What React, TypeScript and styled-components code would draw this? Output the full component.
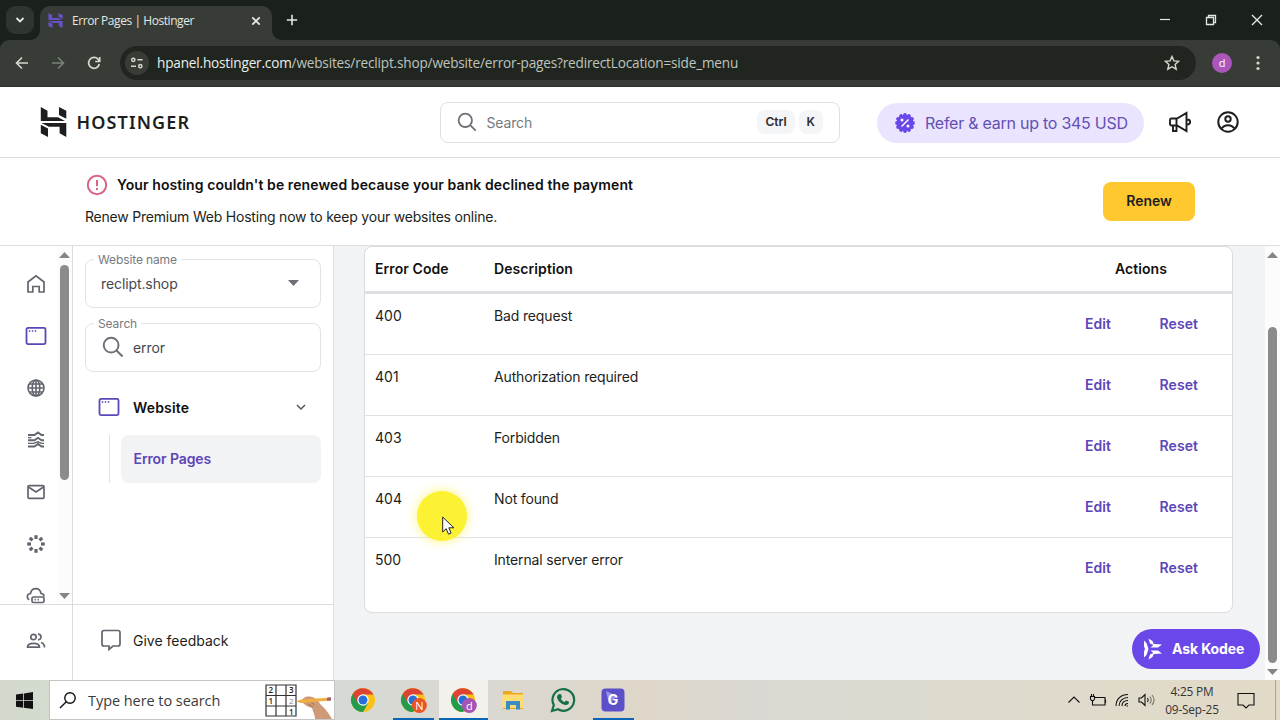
import React from 'react';
import styled, { createGlobalStyle } from 'styled-components';

const GlobalStyle = createGlobalStyle`
  * {
    box-sizing: border-box;
  }

  body {
    margin: 0;
    overflow: hidden;
    font-family: Inter, 'Liberation Sans', sans-serif;
    font-size: 14px;
    color: #1d1e20;
  }

  svg {
    display: block;
    flex-shrink: 0;
  }

  p, h3 {
    margin: 0;
  }

  button {
    border: none;
    padding: 0;
    background: none;
    font-family: inherit;
  }
`;

const Screen = styled.div`
  width: 1280px;
  height: 720px;
  display: flex;
  flex-direction: column;
  position: relative;
  overflow: hidden;
  background: #fff;
`;

/* browser window */

const TabStrip = styled.div`
  height: 40px;
  display: flex;
  align-items: flex-end;
  background: #1a201a;
  color: #e4e7e3;
`;
const TabSearch = styled.div`
  width: 28px;
  height: 28px;
  margin: 0 6px 6px;
  border-radius: 9px;
  display: grid;
  place-items: center;
  background: #2e342e;
`;
const Tab = styled.div`
  width: 232px;
  height: 34px;
  padding: 0 11px 5px 8px;
  border-radius: 10px 10px 0 0;
  display: flex;
  align-items: center;
  position: relative;
  background: #373d36;

  &::before,
  &::after {
    content: '';
    position: absolute;
    bottom: 0;
    width: 9px;
    height: 9px;
  }
  &::before {
    left: -9px;
    background: radial-gradient(circle at 0 0, transparent 8.5px, #373d36 9px);
  }
  &::after {
    right: -9px;
    background: radial-gradient(circle at 100% 0, transparent 8.5px, #373d36 9px);
  }
`;
const TabIcon = styled.span`
  color: #6950c8;
`;
const TabTitle = styled.span`
  flex: 1;
  margin-left: 9px;
  font: 12px/16px 'Open Sans', sans-serif;
  letter-spacing: -0.44px;
`;
const NewTab = styled.div`
  width: 40px;
  height: 40px;
  display: grid;
  place-items: center;
`;
const WindowButtons = styled.div`
  height: 40px;
  margin-left: auto;
  display: grid;
  grid-template-columns: repeat(3, 46px);
  place-items: center;
`;
const ToolbarBack = styled.div`
  height: 47px;
  background: #1a201a;
`;
const Toolbar = styled.div`
  height: 47px;
  padding-left: 4px;
  border-radius: 9px 9px 0 0;
  border-bottom: 1px solid #2b302b;
  display: flex;
  align-items: center;
  background: #373d36;
  color: #d3d8d1;
`;
const NavButton = styled.div<{ $dim?: boolean }>`
  width: 36px;
  display: grid;
  place-items: center;
  color: ${(props) => (props.$dim ? '#7b817a' : '#d3d8d1')};
`;
const AddressBar = styled.div`
  width: 1076px;
  height: 34px;
  margin-left: 8px;
  padding: 0 16px 0 5px;
  border-radius: 17px;
  display: flex;
  align-items: center;
  background: #20261f;
`;
const SiteInfo = styled.div`
  width: 24px;
  height: 24px;
  margin-right: 8px;
  border-radius: 50%;
  display: grid;
  place-items: center;
  background: #373d36;
`;
const Url = styled.span`
  flex: 1;
  font: 13.6px/20px 'Open Sans', sans-serif;
  letter-spacing: -0.18px;
  color: #bfc4be;

  b {
    font-weight: 400;
    color: #eceeeb;
  }
`;
const Avatar = styled.div`
  width: 20px;
  height: 20px;
  margin: 0 16px;
  border-radius: 50%;
  background: #ac55bb;
  color: #fff;
  font: 11px/20px 'Open Sans', sans-serif;
  text-align: center;
`;

/* site header */

const Header = styled.header`
  height: 71px;
  padding: 0 40px;
  border-bottom: 1px solid #dadce0;
  display: grid;
  grid-template-columns: 400px 400px 1fr;
  align-items: center;
  flex-shrink: 0;
`;
const Logo = styled.div`
  display: flex;
  align-items: center;
  gap: 9.5px;
`;
const LogoName = styled.span`
  font: 600 18px/24px 'Noto Sans', sans-serif;
  letter-spacing: 1.12px;
  color: #1d1e20;
`;
const SearchBox = styled.div`
  height: 41px;
  padding: 0 16px;
  border: 1px solid #dfe0e4;
  border-radius: 8px;
  display: flex;
  align-items: center;
  color: #6d7078;
`;
const SearchHint = styled.span`
  flex: 1;
  margin-left: 9.5px;
  font-size: 14px;
  letter-spacing: -0.15px;
  color: #77797e;
`;
const Key = styled.kbd`
  height: 24px;
  margin-left: 4px;
  padding: 0 8px;
  border-radius: 8px;
  background: #f4f5f7;
  color: #2a2c31;
  font: 600 12px/24px Inter, sans-serif;
`;
const HeaderActions = styled.div`
  padding-left: 37px;
  display: flex;
  align-items: center;
`;
const ReferButton = styled.button`
  width: 267px;
  height: 40px;
  margin: 1px 24px 0 0;
  padding-left: 18px;
  border-radius: 20px;
  display: flex;
  align-items: center;
  gap: 10px;
  background: #ebe4ff;
  color: #6250b5;
  font-size: 16px;
  letter-spacing: -0.25px;
  white-space: nowrap;
`;
const Spacer = styled.div`
  width: 24px;
`;

/* payment notice */

const Notice = styled.section`
  height: 88px;
  padding: 0 85px 1px;
  border-bottom: 1px solid #dcdde0;
  display: flex;
  align-items: center;
  justify-content: space-between;
  flex-shrink: 0;
`;
const NoticeBody = styled.div`
  padding-bottom: 2px;
`;
const NoticeTitle = styled.h3`
  display: flex;
  align-items: center;
  gap: 8px;
  margin-bottom: 10px;
  font-size: 14px;
  font-weight: 600;
  line-height: 24px;
  letter-spacing: 0.09px;
  color: #111;
`;
const NoticeIcon = styled.span`
  color: #d76483;
`;
const NoticeText = styled.p`
  font-size: 14px;
  line-height: 20px;
  letter-spacing: -0.21px;
`;
const RenewButton = styled.button`
  width: 92px;
  height: 39px;
  padding-bottom: 1px;
  border-radius: 8px;
  background: #ffc82e;
  color: #1d1e20;
  font-size: 14px;
  font-weight: 600;
`;

/* body */

const Body = styled.div`
  height: 434px;
  display: grid;
  grid-template-columns: 73px 261px 1fr 15px;
  background: #f2f3f5;
`;
const Rail = styled.nav`
  border-right: 1px solid #dadce0;
  display: grid;
  grid-template-rows: 359px 1fr;
  background: #fff;
  color: #62656d;
`;
const RailScroll = styled.div`
  display: flex;
  border-bottom: 1px solid #dadce0;
  overflow: hidden;
`;
const RailItems = styled.div`
  flex: 1;
  padding: 11.5px 0 0 14px;
`;
const RailItem = styled.div<{ $active?: boolean }>`
  height: 52px;
  display: grid;
  place-items: center;
  color: ${(props) => (props.$active ? '#5c46b8' : '#62656d')};
`;
const RailBottom = styled.div`
  display: grid;
  place-items: center;
  padding-bottom: 4px;
`;
const Scrollbar = styled.div<{ $start: number; $length: number }>`
  width: 15px;
  display: grid;
  grid-template-rows: ${(props) => `${props.$start}px ${props.$length}px 1fr`};
  justify-items: center;
  background: #fcfcfc;
  color: #858585;

  svg:first-child {
    margin-top: 6px;
  }
  svg:last-child {
    align-self: end;
    margin-bottom: 5px;
  }
`;
const Thumb = styled.div`
  width: 9px;
  border-radius: 5px;
  background: #8b8b8b;
`;
const Panel = styled.aside`
  border-right: 1px solid #dfe0e4;
  display: grid;
  grid-template-rows: 359px 1fr;
  background: #fff;
`;
const PanelTop = styled.div`
  padding: 5.5px 12px 0;
  border-bottom: 1px solid #dadce0;
`;
const Field = styled.fieldset`
  height: 56px;
  margin: 0 0 8px;
  padding: 0 21px 7px 15px;
  border: 1px solid #e2e3e6;
  border-radius: 8px;
  display: flex;
  align-items: center;
  color: #6d7078;
`;
const FieldLabel = styled.legend`
  margin-left: -7px;
  padding: 0 4px;
  font-size: 12px;
  line-height: 15px;
  letter-spacing: -0.12px;
  color: #77797e;
`;
const FieldIcon = styled.span`
  margin: 0 9px 0 1px;
`;
const FieldValue = styled.span`
  flex: 1;
  letter-spacing: -0.1px;
  color: #45474c;
`;
const MenuHeading = styled.div`
  height: 48px;
  margin-top: 11.5px;
  padding: 0 14px 0 13px;
  display: flex;
  align-items: center;
  color: #5c46b8;
`;
const MenuTitle = styled.span`
  flex: 1;
  margin-left: 13px;
  font-weight: 600;
  letter-spacing: 0.15px;
  color: #111;
`;
const SubMenu = styled.div`
  margin: 4px 0 0 24px;
  padding-left: 11px;
  border-left: 1px solid #dfe0e4;
`;
const SubMenuItem = styled.div`
  height: 48px;
  padding-left: 12.5px;
  border-radius: 8px;
  background: #f2f3f5;
  color: #5c46b8;
  font-weight: 600;
  line-height: 48px;
  letter-spacing: -0.1px;
`;
const Feedback = styled.div`
  padding: 0 0 5px 26px;
  display: flex;
  align-items: center;
  gap: 10px;
  color: #62656d;

  span {
    color: #1d1e20;
  }
`;
const Content = styled.main`
  padding: 0 5px 0 30px;
  display: flex;
  flex-direction: column;
`;
const Table = styled.div`
  width: 869px;
  height: 367px;
  border: 1px solid #dadce0;
  border-radius: 8px;
  background: #fff;
`;
const Row = styled.div`
  height: 61px;
  padding-left: 10px;
  border-bottom: 1px solid #e1e2e6;
  display: grid;
  grid-template-columns: 119px 1fr 74.5px 72.5px;
  line-height: 44px;

  &:last-child {
    border-bottom: none;
  }
`;
const HeadRow = styled(Row)`
  height: 47px;
  border-bottom: 3px solid #dfe0e4;
  grid-template-columns: 119px 1fr 182px;
  font-weight: 600;
  line-height: 43px;
  letter-spacing: 0.08px;
  color: #111;
`;
const Description = styled.span`
  letter-spacing: -0.15px;
`;
const ActionsHead = styled.span`
  text-align: center;
`;
const TextButton = styled.button`
  height: 60px;
  padding-bottom: 2px;
  text-align: left;
  color: #5c46b8;
  font-size: 14px;
  font-weight: 600;
  letter-spacing: 0.08px;
`;
const KodeeButton = styled.button`
  width: 128px;
  height: 40px;
  margin: 16px 0 0 auto;
  padding: 0 0 1px 11px;
  border-radius: 20px;
  display: flex;
  align-items: center;
  gap: 9px;
  background: #6947e8;
  color: #fff;
  font-size: 14px;
  font-weight: 700;
  letter-spacing: -0.1px;
  white-space: nowrap;
`;

/* mouse pointer with its highlight, drawn over everything */

const Pointer = styled.div`
  position: absolute;
  left: 417px;
  top: 491px;
  width: 50px;
  height: 50px;
  padding: 25px 0 0 25px;
  border-radius: 50%;
  background: #fdf133;
  box-shadow: 0 0 9px 2px rgba(251, 243, 80, 0.55);
`;

/* windows taskbar */

const Taskbar = styled.footer`
  height: 40px;
  display: flex;
  align-items: stretch;
  background: linear-gradient(90deg, #d3dacd 0, #d6d9d4 335px, #dad8d2 480px, #ded6c8 640px, #d9d8d2 760px, #dedacd 1000px, #e2dac7 1280px);
  color: #111;
`;
const StartButton = styled.div`
  width: 49px;
  padding-right: 1px;
  display: grid;
  place-items: center;
`;
const TaskSearch = styled.div`
  width: 286px;
  padding-left: 9px;
  border: 1px solid #c4c6c3;
  display: flex;
  align-items: center;
  background: #fff;
`;
const TaskSearchText = styled.span`
  width: 178px;
  margin: 2px 0 0 12px;
  font: 14.5px/20px 'Open Sans', sans-serif;
  letter-spacing: -0.06px;
  color: #3b3b3b;
`;
const Apps = styled.div`
  margin-left: 3px;
  display: grid;
  grid-template-columns: repeat(6, 50px);
`;
const AppButton = styled.div<{ $active?: boolean; $open?: boolean }>`
  margin: 0 0.5px;
  padding-top: 2px;
  display: grid;
  grid-template-rows: 36px 2px;
  place-items: center;
  background: ${(props) => (props.$active ? '#f3f1ec' : 'transparent')};

  &::after {
    content: '';
    width: ${(props) => (props.$active ? '49px' : '41px')};
    height: 2px;
    background: ${(props) => (props.$open ? '#0b65b5' : 'transparent')};
  }
`;
const Tray = styled.div`
  margin-left: auto;
  display: flex;
  align-items: center;
`;
const TrayIcons = styled.div`
  display: grid;
  grid-template-columns: repeat(4, 24px);
  place-items: center;
`;
const Clock = styled.div`
  width: 68px;
  font: 11.8px/18px 'Open Sans', sans-serif;
  letter-spacing: -0.15px;
  text-align: center;
  color: #333;
  white-space: nowrap;
`;
const Notifications = styled.div`
  width: 50px;
  height: 40px;
  margin-right: 4px;
  padding-right: 20px;
  border-right: 1px solid #aaa596;
  display: grid;
  place-items: center end;
`;

type IconProps = { w?: number; h?: number; box?: string; sw?: number; children: React.ReactNode };

const Icon = ({ w = 24, h = w, box = `0 0 ${w} ${h}`, sw = 1.7, children }: IconProps) => (
  <svg width={w} height={h} viewBox={box} fill="none" stroke="currentColor" strokeWidth={sw}>
    {children}
  </svg>
);

const HMark = ({ w, h }: { w: number; h: number }) => (
  <svg width={w} height={h} viewBox="0 0 27 30" preserveAspectRatio="none" fill="currentColor">
    <path d="M.8 0l6.700 3.800v6.400H18l7 3.700H.8zM19 0l7.300 3.800v8L19 8z" />
    <path d="M26.300 30l-6.700-3.800v-6.400H9l-7.500-3.900h24.800zM8 30L.8 26.200v-8.500L8 21.500z" />
  </svg>
);

const Magnifier = ({ size = 20 }: { size?: number }) => (
  <Icon w={size} box="0 0 20 20" sw={1.8}>
    <circle cx="8.300" cy="8.300" r="6.700" />
    <path d="M13.200 13.200l5.500 5.500" />
  </Icon>
);

const BrowserIcon = () => (
  <Icon w={22} h={20} sw={1.8}>
    <rect x="1.500" y="1.900" width="19" height="16.200" rx="1.500" />
    <path d="M3.800 5h1.500M6.800 5h1.500M9.800 5h1.500" strokeWidth="1.500" />
  </Icon>
);

const Arrow = ({ up }: { up?: boolean }) => (
  <svg width="11" height="6" viewBox="0 0 11 6" fill="currentColor">
    <path d={up ? 'M0 6L5.500 0L11 6z' : 'M0 0L5.500 6L11 0z'} />
  </svg>
);

const ChromeIcon = ({ badge, color }: { badge?: string; color?: string }) => (
  <svg width="28" height="26" viewBox="0 0 28 26">
    <circle cx="14" cy="13" r="12" fill="#fbc116" />
    <path d="M14 13L3.600 7A12 12 0 0 0 14 25l5.200-9z" fill="#229b4b" />
    <path d="M14 13v-5.500h10.500A12 12 0 0 0 3.600 7l5.200 9z" fill="#dd4332" />
    <circle cx="14" cy="13" r="5.700" fill="#fff" />
    <circle cx="14" cy="13" r="4.500" fill="#2470d8" />
    {badge && (
      <>
        <circle cx="20.300" cy="18.500" r="7.500" fill={color} />
        <text x="20.300" y="22.500" textAnchor="middle" fontSize="11" fontFamily="Open Sans" fill="#fff">
          {badge}
        </text>
      </>
    )}
  </svg>
);

const railIcons = [
  <Icon w={20}>
    <path d="M2 8L10 1.800 18 8v10h-4.800v-5.500H6.800V18H2z" />
  </Icon>,
  <BrowserIcon />,
  <Icon w={20} sw={1.6}>
    <circle cx="10" cy="10" r="8" />
    <ellipse cx="10" cy="10" rx="3.800" ry="8" />
    <path d="M10 2v16M2 10h16M3 6h14M3 14h14" />
  </Icon>,
  <Icon w={18} sw={1.900}>
    <path d="M1 4h6.500l3.500-2.500L14.500 4H17" />
    <path d="M1 9.300h6.500L11 6.800l3.500 2.500H17" />
    <path d="M1 15.500h6.500L11 13l3.500 2.500H17" />
    <path d="M1 6.700h3.500M1 12.300h5.500l4.500-1.500 3.500 1.500H17" strokeWidth="1.300" />
  </Icon>,
  <Icon w={20}>
    <rect x="2" y="3.700" width="16" height="12.600" rx="1" />
    <path d="M2.500 5l7.500 5 7.500-5" />
  </Icon>,
  <Icon w={20} sw={3.200}>
    {[0, 45, 90, 135, 180, 225, 270, 315].map((deg) => (
      <path key={deg} d="M10 1.200v3.800" transform={`rotate(${deg} 10 10)`} />
    ))}
  </Icon>,
  <Icon w={20}>
    <path d="M3 14C0 11 1.500 7.500 4.500 7.500 5.500 1 14 1 15 7.500c2 0 3 1.500 3 3" />
    <rect x="6" y="11" width="12" height="5.500" rx="1.500" />
    <path d="M8.500 13.700h1.300M11.500 13.700h1.300" />
  </Icon>,
];

const errors = [
  { code: '400', description: 'Bad request' },
  { code: '401', description: 'Authorization required' },
  { code: '403', description: 'Forbidden' },
  { code: '404', description: 'Not found' },
  { code: '500', description: 'Internal server error' },
];

const Browser = () => (
  <>
    <TabStrip>
      <TabSearch>
        <Icon w={10} sw={1.8}>
          <path d="M1.500 3l3.500 3.500L8.500 3" />
        </Icon>
      </TabSearch>
      <Tab>
        <TabIcon>
          <HMark w={15} h={15} />
        </TabIcon>
        <TabTitle>Error Pages | Hostinger</TabTitle>
        <Icon w={10} sw={1.8}>
          <path d="M1.300 1.300l7.400 7.400M8.700 1.300L1.300 8.700" />
        </Icon>
      </Tab>
      <NewTab>
        <Icon w={12} sw={1.6}>
          <path d="M6 .8v10.400M.8 6h10.400" />
        </Icon>
      </NewTab>
      <WindowButtons>
        <Icon w={12} sw={1.2}>
          <path d="M1 5.500h10" />
        </Icon>
        <Icon w={12} sw={1.3}>
          <path d="M1.500 3.500h7v7h-7zM3.500 3V1.500h7v7H9" />
        </Icon>
        <Icon w={12} sw={1.4}>
          <path d="M1 1l10 10M11 1L1 11" />
        </Icon>
      </WindowButtons>
    </TabStrip>
    <ToolbarBack>
      <Toolbar>
        <NavButton>
          <Icon w={14} sw={1.6}>
            <path d="M13 7H1.500M7 1.500L1.500 7 7 12.500" />
          </Icon>
        </NavButton>
        <NavButton $dim>
          <Icon w={14} sw={1.6}>
            <path d="M1 7h11.500M7 1.500L12.500 7 7 12.500" />
          </Icon>
        </NavButton>
        <NavButton>
          <Icon w={14} sw={1.7}>
            <path d="M12.300 8A5.400 5.400 0 1 1 11 3.200L12.500 5M12.700 1v4.500H8.200" />
          </Icon>
        </NavButton>
        <AddressBar>
          <SiteInfo>
            <Icon w={14} sw={1.5}>
              <circle cx="3.300" cy="3.800" r="1.600" />
              <path d="M7.500 3.800h5M1 10.200h5" />
              <circle cx="10.300" cy="10.200" r="1.600" />
            </Icon>
          </SiteInfo>
          <Url>
            <b>hpanel.hostinger.com</b>/websites/reclipt.shop/website/error-pages?redirectLocation=side_menu
          </Url>
          <Icon w={16} sw={1.4}>
            <path d="M8 1.500l1.900 4.400 4.800.4-3.600 3.200 1.100 4.700L8 11.700l-4.200 2.500 1.100-4.700L1.300 6.300l4.800-.4z" />
          </Icon>
        </AddressBar>
        <Avatar>d</Avatar>
        <svg width="20" height="16" viewBox="0 0 20 16" fill="currentColor">
          <circle cx="10" cy="2.500" r="1.600" />
          <circle cx="10" cy="8" r="1.600" />
          <circle cx="10" cy="13.500" r="1.600" />
        </svg>
      </Toolbar>
    </ToolbarBack>
  </>
);

const SiteHeader = () => (
  <Header>
    <Logo>
      <HMark w={27} h={30} />
      <LogoName>HOSTINGER</LogoName>
    </Logo>
    <SearchBox>
      <Magnifier />
      <SearchHint>Search</SearchHint>
      <Key>Ctrl</Key>
      <Key>K</Key>
    </SearchBox>
    <HeaderActions>
      <ReferButton>
        <svg width="20" height="20" viewBox="0 0 20 20">
          <g fill="#6947e8">
            <circle cx="10" cy="10" r="8.300" />
            {[0, 30, 60, 90, 120, 150, 180, 210, 240, 270, 300, 330].map((deg) => (
              <circle key={deg} cx="10" cy="2" r="1.900" transform={`rotate(${deg} 10 10)`} />
            ))}
          </g>
          <path d="M6.500 13.500l7-7" stroke="#fff" strokeWidth="1.500" />
          <circle cx="7" cy="7" r="1.500" fill="#fff" />
          <circle cx="13" cy="13" r="1.500" fill="#fff" />
        </svg>
        Refer &amp; earn up to 345 USD
      </ReferButton>
      <Icon w={24} sw={1.9}>
        <path d="M3.500 8.500H9l9.500-5.500v18L9 15.500H3.500A1.500 1.500 0 0 1 2 14v-4a1.500 1.500 0 0 1 1.500-1.500zM8.500 8.500v7M5 15.500V21h3.500v-5.500M19 9.500c4.200 0 4.200 5 0 5" />
      </Icon>
      <Spacer />
      <Icon w={24} sw={2}>
        <circle cx="12" cy="12" r="9.700" />
        <circle cx="12" cy="9" r="2.700" />
        <path d="M5.500 18.500c3-4.500 10-4.500 13 0" />
      </Icon>
    </HeaderActions>
  </Header>
);

const WindowsTaskbar = () => (
  <Taskbar>
    <StartButton>
      <svg width="17" height="17" viewBox="0 0 17 17" fill="#111">
        <path d="M0 2.500l7.200-1v6.700H0zM8 1.400L17 0v8.200H8zM0 9h7.200v6.700l-7.200-1zM8 9h9v8l-9-1.200z" />
      </svg>
    </StartButton>
    <TaskSearch>
      <Icon w={17} sw={1.4}>
        <circle cx="11" cy="6" r="5.200" />
        <path d="M7.300 9.700L1 16" />
      </Icon>
      <TaskSearchText>Type here to search</TaskSearchText>
      <svg width="69" height="38" viewBox="0 0 69 38">
        <path d="M1 4h30v31H1zM11 4v31M21 4v31M1 14.500h30M1 25h30" fill="none" stroke="#333" strokeWidth="1.200" />
        <g fontFamily="Open Sans" fontSize="8" fontWeight="600" fill="#222">
          <text x="3.500" y="12.200">2</text>
          <text x="24" y="12.200">3</text>
          <text x="3.500" y="22.800">1</text>
          <text x="24" y="33.600">1</text>
        </g>
        <text x="24" y="23" fontFamily="Open Sans" fontSize="8" fill="#888">2</text>
        <path d="M36 21c1-4 5-6 9-5.500 3 .3 6 2 8 4.500l3 4c5 4 8 9 11 14H50c0-4-2-7-3-11-4-1-7-3-9-5z" fill="#cf9a78" />
        <path d="M41 19c4 0 6 2 8 5M43 23l5 3" stroke="#a56f52" fill="none" />
        <path d="M31 20.500l5-2 30-2v3l-30 2.500z" fill="#eeb045" />
        <path d="M62 16.800l4-.5v3.200l-4 .3z" fill="#a15b80" />
      </svg>
    </TaskSearch>
    <Apps>
      <AppButton>
        <ChromeIcon />
      </AppButton>
      <AppButton $open>
        <ChromeIcon badge="N" color="#ed5324" />
      </AppButton>
      <AppButton $open $active>
        <ChromeIcon badge="d" color="#a653b4" />
      </AppButton>
      <AppButton>
        <svg width="24" height="24" viewBox="0 0 24 24">
          <path d="M2 3h8l2 2h10v16H2z" fill="#e9a820" />
          <path d="M1.500 6.500h21V20h-21z" fill="#ffdc74" />
          <path d="M5 13h14v8.500h-4V17H9v4.500H5z" fill="#398cc5" />
        </svg>
      </AppButton>
      <AppButton>
        <svg width="26" height="26" viewBox="0 0 26 26">
          <path d="M2 24l1.800-6A10.800 10.800 0 1 1 8 22.300z" fill="none" stroke="#15704a" strokeWidth="2.200" />
          <path d="M9 7l2 .3 1 3-1.200 1.500c.8 1.600 2 2.500 3.700 3.200l1.500-1.600 3 1.400c.2 2.500-2 3.600-4 3.200-4-1-6.900-3.700-8-7.500C7 8.500 8 7.500 9 7z" fill="#15704a" />
        </svg>
      </AppButton>
      <AppButton $open>
        <svg width="24" height="24" viewBox="0 0 24 24">
          <rect x=".5" y=".5" width="23" height="23" rx="4" fill="#5b50c8" />
          <path d="M5 3l11 5-8 8z" fill="#9d91ec" />
          <text x="12" y="17" textAnchor="middle" fontFamily="Inter" fontSize="14" fontWeight="700" fill="#fff">G</text>
        </svg>
      </AppButton>
    </Apps>
    <Tray>
      <TrayIcons>
        <Icon w={14} sw={1.1}>
          <path d="M1.500 9.500L7 4l5.500 5.500" />
        </Icon>
        <Icon w={18} h={14} sw={1.1}>
          <path d="M6 4.500h10v7.500H5M16.500 6.500v3.500M1.500 3.500h4v2.500l-1 1.500h-2l-1-1.500zM2.500 3V1M4.500 3V1M3.500 8v4H6" />
        </Icon>
        <Icon w={16} sw={1.1}>
          <path d="M2 14C2 7 7 2.500 14 2.500M5 14c0-5 4-8.500 9-8.500M8 14c0-3.500 2.500-5.500 6-5.500M11 14c0-1.500 1-2.500 3-2.500M12.500 14h1.500" />
        </Icon>
        <Icon w={18} h={14} sw={1.1}>
          <path d="M2 5h2.500L8 1.500v11L4.500 9H2z" />
          <path d="M10.500 5c1 1.300 1 2.700 0 4" />
          <path d="M12.700 3.500c1.800 2 1.800 5 0 7M15 2c2.500 3 2.500 7 0 10" opacity=".5" />
        </Icon>
      </TrayIcons>
      <Clock>
        4:25 PM
        <br />
        09-Sep-25
      </Clock>
      <Notifications>
        <Icon w={18} h={18} sw={1.1}>
          <path d="M1 2.500h16v11.500h-5l-3 3-3-3H1z" />
        </Icon>
      </Notifications>
    </Tray>
  </Taskbar>
);

const App = () => {
  return (
    <Screen>
      <GlobalStyle />
      <Browser />
      <SiteHeader />
      <Notice>
        <NoticeBody>
          <NoticeTitle>
            <NoticeIcon>
              <Icon w={24} sw={2}>
                <circle cx="12" cy="12" r="9.200" />
                <path d="M12 7v6.300M12 15v2" />
              </Icon>
            </NoticeIcon>
            Your hosting couldn't be renewed because your bank declined the payment
          </NoticeTitle>
          <NoticeText>Renew Premium Web Hosting now to keep your websites online.</NoticeText>
        </NoticeBody>
        <RenewButton>Renew</RenewButton>
      </Notice>
      <Body>
        <Rail>
          <RailScroll>
            <RailItems>
              {railIcons.map((icon, i) => (
                <RailItem key={i} $active={i === 1}>
                  {icon}
                </RailItem>
              ))}
            </RailItems>
            <Scrollbar $start={19} $length={215}>
              <Arrow up />
              <Thumb />
              <Arrow />
            </Scrollbar>
          </RailScroll>
          <RailBottom>
            <Icon w={20} h={16}>
              <circle cx="7.500" cy="4" r="2.700" />
              <path d="M1.500 14.200c0-5 12-5 12 0zM12 1.200c4 0 4 5.600 0 5.600M15 9.500c2.500.8 3.500 2.500 3.500 5" />
            </Icon>
          </RailBottom>
        </Rail>
        <Panel>
          <PanelTop>
            <Field>
              <FieldLabel>Website name</FieldLabel>
              <FieldValue>reclipt.shop</FieldValue>
              <Arrow />
            </Field>
            <Field>
              <FieldLabel>Search</FieldLabel>
              <FieldIcon>
                <Magnifier size={22} />
              </FieldIcon>
              <FieldValue>error</FieldValue>
            </Field>
            <MenuHeading>
              <BrowserIcon />
              <MenuTitle>Website</MenuTitle>
              <Icon w={12} sw={1.5}>
                <path d="M2 4l4 4 4-4" stroke="#55575d" />
              </Icon>
            </MenuHeading>
            <SubMenu>
              <SubMenuItem>Error Pages</SubMenuItem>
            </SubMenu>
          </PanelTop>
          <Feedback>
            <Icon w={24} sw={1.7}>
              <path d="M5 2.500h14a2 2 0 0 1 2 2V16a2 2 0 0 1-2 2h-5l-4 3.500V18H5a2 2 0 0 1-2-2V4.500a2 2 0 0 1 2-2z" />
            </Icon>
            <span>Give feedback</span>
          </Feedback>
        </Panel>
        <Content>
          <Table>
            <HeadRow>
              <span>Error Code</span>
              <span>Description</span>
              <ActionsHead>Actions</ActionsHead>
            </HeadRow>
            {errors.map((error) => (
              <Row key={error.code}>
                <span>{error.code}</span>
                <Description>{error.description}</Description>
                <TextButton>Edit</TextButton>
                <TextButton>Reset</TextButton>
              </Row>
            ))}
          </Table>
          <KodeeButton>
            <svg width="20" height="22" viewBox="0 0 20 22" fill="#fff">
              <path d="M1 2.500L3.500 5 5.500 11l-2 6L1 19.500v-6L2 11l-1-2.500z" />
              <path d="M5.500.5l4 2.500 2 4.500-4.500-2zM5.500 21.500l4-2.500 2-4.500-4.500 2z" />
              <path d="M7.500 9.500l4-3.500 7.500.5-4 3zM7.500 12.500l4 3.500 7.500-.5-4-3z" />
            </svg>
            Ask Kodee
          </KodeeButton>
        </Content>
        <Scrollbar $start={81} $length={336}>
          <Arrow up />
          <Thumb />
          <Arrow />
        </Scrollbar>
      </Body>
      <WindowsTaskbar />
      <Pointer>
        <svg width="13" height="20" viewBox="0 0 13 20">
          <path d="M.7 1v15l3.500-3.300 2.300 5.500 2.600-1.100-2.300-5.300h5z" fill="#fff" stroke="#222" strokeWidth="1" />
        </svg>
      </Pointer>
    </Screen>
  );
};

export default App;
